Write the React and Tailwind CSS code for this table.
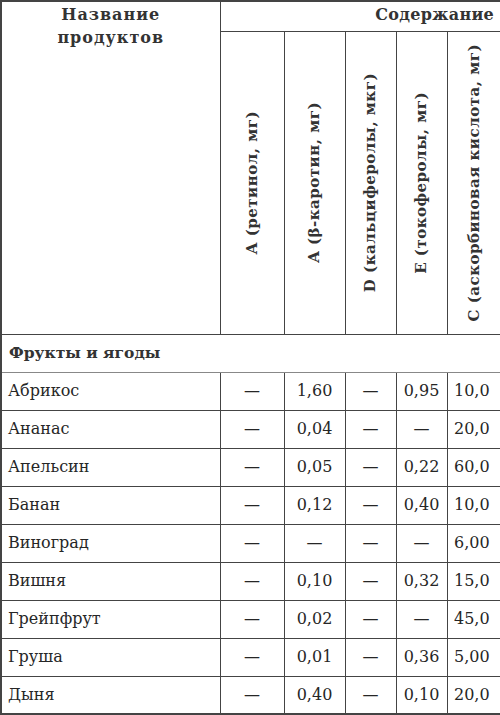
import React from 'react';

const ROWS = [
  ['Абрикос', '—', '1,60', '—', '0,95', '10,0'],
  ['Ананас', '—', '0,04', '—', '—', '20,0'],
  ['Апельсин', '—', '0,05', '—', '0,22', '60,0'],
  ['Банан', '—', '0,12', '—', '0,40', '10,0'],
  ['Виноград', '—', '—', '—', '—', '6,00'],
  ['Вишня', '—', '0,10', '—', '0,32', '15,0'],
  ['Грейпфрут', '—', '0,02', '—', '—', '45,0'],
  ['Груша', '—', '0,01', '—', '0,36', '5,00'],
  ['Дыня', '—', '0,40', '—', '0,10', '20,0'],
];

const HEADS = [
  'A (ретинол, мг)',
  'A (β-каротин, мг)',
  'D (кальциферолы, мкг)',
  'E (токоферолы, мг)',
  'C (аскорбиновая кислота, мг)',
];

export default function App() {
  return (
    <div className="w-[500px] h-[715px] bg-white overflow-hidden text-[#262626]" style={{ fontFamily: '"DejaVu Serif", "Liberation Serif", serif' }}>
      <table className="table-fixed border-collapse w-[500px] border-2 border-[#444]">
        <colgroup>
          <col className="w-[219px]" />
          <col className="w-[64px]" />
          <col className="w-[61px]" />
          <col className="w-[51px]" />
          <col className="w-[51px]" />
          <col className="w-[54px]" />
        </colgroup>
        <thead>
          <tr className="h-[30px]">
            <th rowSpan={2} className="border border-[#444] align-top pt-[1px] text-[16px] leading-[23px] font-bold tracking-[1px] text-[#333]">
              Название<br />продуктов
            </th>
            <th colSpan={5} className="border border-[#444] text-right pr-[6px] pb-[2px] text-[16px] font-bold tracking-[0.3px] text-[#333]">
              Содержание
            </th>
          </tr>
          <tr className="h-[302px]">
            {HEADS.map((h, i) => (
              <th key={i} className={`border ${i === 3 ? 'border-l-[#999]' : ''} border-[#444] p-0 align-middle`}>
                <div className="flex items-center justify-center h-[302px]">
                  <span className="[writing-mode:vertical-rl] rotate-180 whitespace-nowrap text-[15px] font-bold text-[#333] tracking-[0.5px]">{h}</span>
                </div>
              </th>
            ))}
          </tr>
        </thead>
        <tbody>
          <tr className="h-[38px]">
            <td colSpan={6} className="border border-[#444] border-b-[#888] pl-[7px] text-[15.5px] font-bold text-[#333]">Фрукты и ягоды</td>
          </tr>
          {ROWS.map((r, i) => (
            <tr key={i} className="h-[38px]">
              <td className="border border-[#444] pl-[6px] text-[16px]">{r[0]}</td>
              {r.slice(1).map((v, j) => (
                <td key={j} className={`border border-[#444] ${j === 3 ? 'border-l-[#999]' : ''} ${j === 4 ? 'pr-[4px]' : 'px-0'} text-center text-[16px]`}>{v}</td>
              ))}
            </tr>
          ))}
        </tbody>
      </table>
    </div>
  );
}
